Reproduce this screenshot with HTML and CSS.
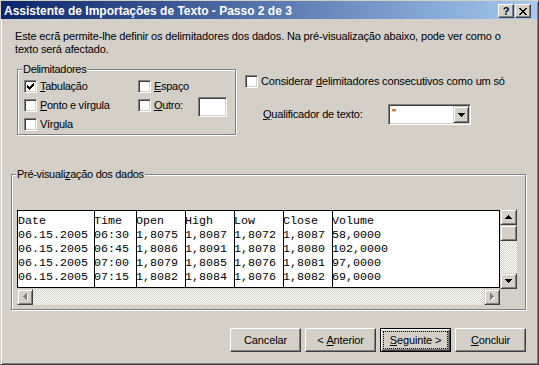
FILE: index.html
```html
<!DOCTYPE html>
<html>
<head>
  <meta charset="utf-8">
  <link rel="stylesheet" href="styles.css">
</head>
<body>
  <div class="window">
    <div class="titlebar">
      <span class="title">Assistente de Importações de Texto - Passo 2 de 3</span>
      <div class="caption-buttons">
        <span class="cap-btn help">?</span>
        <span class="cap-btn close">
          <svg width="8" height="7" viewBox="0 0 8 7"><path d="M0 0h2v1H0zM6 0h2v1H6zM1 1h2v1H1zM5 1h2v1H5zM2 2h4v1H2zM3 3h2v1H3zM2 4h4v1H2zM1 5h2v1H1zM5 5h2v1H5zM0 6h2v1H0zM6 6h2v1H6z"/></svg>
        </span>
      </div>
    </div>

    <div class="main">
      <p class="intro">Este ecrã permite-lhe definir os delimitadores dos dados. Na pré-visualização abaixo, pode ver como o<br>texto será afectado.</p>

      <div class="options">
        <fieldset class="group delims">
          <legend>Delimitadores</legend>
          <div class="delim-grid">
            <label class="check">
              <span class="box"><svg width="7" height="7" viewBox="0 0 7 7"><path d="M6 0h1v1H6zM5 1h2v1H5zM0 2h1v1H0zM4 2h3v1H4zM0 3h2v1H0zM3 3h3v1H3zM0 4h5v1H0zM1 5h3v1H1zM2 6h1v1H2z"/></svg></span>
              <span><u>T</u>abulação</span>
            </label>
            <label class="check">
              <span class="box"></span>
              <span><u>E</u>spaço</span>
            </label>
            <label class="check">
              <span class="box"></span>
              <span><u>P</u>onto e vírgula</span>
            </label>
            <div class="check other">
              <span class="box"></span>
              <span><u>O</u>utro:</span>
              <span class="field"></span>
            </div>
            <label class="check">
              <span class="box"></span>
              <span>Vír<u>g</u>ula</span>
            </label>
          </div>
        </fieldset>

        <div class="side">
          <label class="check consecutive">
            <span class="box"></span>
            <span>Considerar <u>d</u>elimitadores consecutivos como um só</span>
          </label>
          <div class="qualifier">
            <span class="qualifier-label"><u>Q</u>ualificador de texto:</span>
            <div class="combo">
              <span class="combo-text">"</span>
              <span class="raised combo-btn">
                <svg width="7" height="4" viewBox="0 0 7 4"><path d="M0 0h7v1H0zM1 1h5v1H1zM2 2h3v1H2zM3 3h1v1H3z"/></svg>
              </span>
            </div>
          </div>
        </div>
      </div>

      <fieldset class="group preview">
        <legend>Pré-visuali<u>z</u>ação dos dados</legend>
        <div class="preview-area">
          <div class="preview-main">
            <div class="data">
              <div class="col col-date">Date
06.15.2005
06.15.2005
06.15.2005
06.15.2005</div>
              <div class="col col-time">Time
06:30
06:45
07:00
07:15</div>
              <div class="col col-num">Open
1,8075
1,8086
1,8079
1,8082</div>
              <div class="col col-num">High
1,8087
1,8091
1,8085
1,8084</div>
              <div class="col col-num">Low
1,8072
1,8078
1,8076
1,8076</div>
              <div class="col col-num">Close
1,8087
1,8080
1,8081
1,8082</div>
              <div class="col col-last">Volume
58,0000
102,0000
97,0000
69,0000</div>
            </div>
            <div class="hscroll">
              <span class="raised sb-btn">
                <svg width="5" height="8" viewBox="0 0 5 8"><path fill="#fff" d="M4 1h1v7H4zM3 2h1v5H3zM2 3h1v3H2zM1 4h1v1H1z"/><path fill="#808080" d="M3 0h1v7H3zM2 1h1v5H2zM1 2h1v3H1zM0 3h1v1H0z"/></svg>
              </span>
              <span class="track"></span>
              <span class="raised sb-btn">
                <svg width="5" height="8" viewBox="0 0 5 8"><path fill="#fff" d="M1 1h1v7H1zM2 2h1v5H2zM3 3h1v3H3zM4 4h1v1H4z"/><path fill="#808080" d="M0 0h1v7H0zM1 1h1v5H1zM2 2h1v3H2zM3 3h1v1H3z"/></svg>
              </span>
            </div>
          </div>
          <div class="vscroll">
            <span class="raised sb-btn">
              <svg width="7" height="4" viewBox="0 0 7 4"><path d="M3 0h1v1H3zM2 1h3v1H2zM1 2h5v1H1zM0 3h7v1H0z"/></svg>
            </span>
            <span class="raised sb-thumb"></span>
            <span class="track"></span>
            <span class="raised sb-btn">
              <svg width="7" height="4" viewBox="0 0 7 4"><path d="M0 0h7v1H0zM1 1h5v1H1zM2 2h3v1H2zM3 3h1v1H3z"/></svg>
            </span>
          </div>
        </div>
      </fieldset>

      <div class="buttons">
        <span class="btn">Cancelar</span>
        <span class="btn">&lt;&nbsp;<u>A</u>nterior</span>
        <span class="btn default"><u>S</u>eguinte&nbsp;&gt;</span>
        <span class="btn"><u>C</u>oncluir</span>
      </div>
    </div>
  </div>
</body>
</html>
```

FILE: styles.css
```css
* {
  box-sizing: border-box;
}

body {
  margin: 0;
  background: #d4d0c8;
  font-family: "Liberation Sans", Arial, sans-serif;
  font-size: 11px;
  line-height: 13px;
  color: #000;
}

u {
  text-underline-offset: 1px;
}

/* window frame */
.window {
  width: 539px;
  height: 365px;
  background: #d4d0c8;
  border: 1px solid;
  border-color: #d4d0c8 #404040 #404040 #d4d0c8;
  box-shadow: inset 1px 1px #fff, inset -1px -1px #808080;
}

.titlebar {
  height: 18px;
  margin-right: 1px;
  padding: 0 6px 0 3px;
  display: flex;
  align-items: center;
  justify-content: space-between;
  background: linear-gradient(to right, #0a246a, #a6caf0);
}

.title {
  padding-top: 2px;
  color: #fff;
  font-weight: bold;
  font-size: 12px;
  white-space: nowrap;
}

.caption-buttons {
  display: flex;
  gap: 1px;
  margin-top: 2px;
}

.cap-btn {
  width: 16px;
  height: 14px;
  display: flex;
  align-items: center;
  justify-content: center;
  background: #d4d0c8;
  border: 1px solid;
  border-color: #fff #404040 #404040 #fff;
  box-shadow: inset -1px -1px #808080;
  font-weight: bold;
  font-size: 11px;
  line-height: 12px;
}

.raised {
  background: #d4d0c8;
  border: 1px solid;
  border-color: #d4d0c8 #404040 #404040 #d4d0c8;
  box-shadow: inset 1px 1px #fff, inset -1px -1px #808080;
}

.main {
  padding: 0 11px 0 10px;
}

.intro {
  margin: 11px 0 0 4px;
  white-space: nowrap;
  letter-spacing: -0.15px;
}

/* group boxes */
.group {
  margin: 0;
  padding: 0;
  min-width: 0;
  border: 1px solid #808080;
  box-shadow: inset 1px 1px #fff, 1px 1px #fff;
}

.group legend {
  margin-left: 4px;
  padding: 0 1px;
  background: #d4d0c8;
  letter-spacing: -0.3px;
}

.options {
  display: flex;
  align-items: flex-start;
  margin: 7px 0 0 6px;
}

.delims {
  width: 219px;
}

.delim-grid {
  display: grid;
  grid-template-columns: 114px 89px;
  row-gap: 6px;
  padding: 4px 0 3px 6px;
}

.check {
  display: flex;
  align-items: center;
  gap: 3px;
  height: 13px;
  white-space: nowrap;
  letter-spacing: -0.3px;
}

.check.consecutive {
  letter-spacing: -0.17px;
}

.box {
  width: 13px;
  height: 13px;
  flex: none;
  display: flex;
  align-items: center;
  justify-content: center;
  background: #fff;
  border: 1px solid;
  border-color: #808080 #fff #fff #808080;
  box-shadow: inset 1px 1px #404040, inset -1px -1px #d4d0c8;
}

.field {
  width: 29px;
  height: 20px;
  margin: -2px 0 -5px auto;
  align-self: flex-start;
  background: #fff;
  border: 1px solid;
  border-color: #808080 #fff #fff #808080;
  box-shadow: inset 1px 1px #404040, inset -1px -1px #d4d0c8;
}

.side {
  margin: 12px 0 0 9px;
}

.qualifier {
  display: flex;
  align-items: center;
  margin-top: 16px;
  padding-left: 18px;
}

.qualifier-label {
  width: 125px;
  letter-spacing: -0.2px;
}

.combo {
  width: 83px;
  height: 21px;
  display: flex;
  justify-content: space-between;
  padding: 1px;
  background: #fff;
  border: 1px solid;
  border-color: #808080 #fff #fff #808080;
  box-shadow: inset 1px 1px #404040, inset -1px -1px #d4d0c8;
}

.combo-text {
  padding: 1px 0 0 2px;
  color: #000;
}

.combo-btn {
  width: 16px;
  height: 17px;
  display: flex;
  align-items: center;
  justify-content: center;
}

/* preview */
.preview {
  width: 515px;
  margin-top: 33px;
}

.preview-area {
  display: flex;
  align-items: flex-start;
  padding: 28px 0 4px 5px;
}

.preview-main {
  width: 483px;
  margin-top: 1px;
}

.data {
  display: flex;
  height: 78px;
  background: #fff;
  border: 1px solid #000;
}

.col {
  padding: 3px 0;
  white-space: pre;
  font-family: "Liberation Mono", "Courier New", monospace;
  font-size: 11.67px;
  line-height: 14px;
  box-shadow: inset 1px 0 #000;
}

.col-date {
  width: 76px;
  box-shadow: none;
}

.col-time {
  width: 42px;
}

.col-num {
  width: 49px;
}

.col-last {
  flex: 1;
}

.track {
  flex: 1;
  background: repeating-conic-gradient(#fff 0 25%, #d4d0c8 0 50%) 0 0 / 2px 2px;
}

.hscroll {
  display: flex;
  height: 16px;
  margin-top: 1px;
}

.sb-btn {
  width: 16px;
  height: 16px;
  flex: none;
  display: flex;
  align-items: center;
  justify-content: center;
}

.vscroll {
  width: 17px;
  height: 80px;
  display: flex;
  flex-direction: column;
}

.vscroll .sb-btn {
  width: 17px;
}

.sb-thumb {
  height: 16px;
  flex: none;
}

/* dialog buttons */
.buttons {
  display: flex;
  justify-content: flex-end;
  gap: 4px;
  margin: 18px 1px 0 0;
}

.btn {
  width: 71px;
  height: 24px;
  display: flex;
  align-items: center;
  justify-content: center;
  background: #d4d0c8;
  border: 1px solid;
  border-color: #fff #404040 #404040 #fff;
  box-shadow: inset -1px -1px #808080, inset 1px 1px #d4d0c8;
  letter-spacing: -0.15px;
  white-space: nowrap;
}

.btn.default {
  border-color: #000;
  box-shadow: inset 1px 1px #fff, inset -1px -1px #404040, inset -2px -2px #808080;
  outline: 1px dotted #000;
  outline-offset: -4px;
}
```
